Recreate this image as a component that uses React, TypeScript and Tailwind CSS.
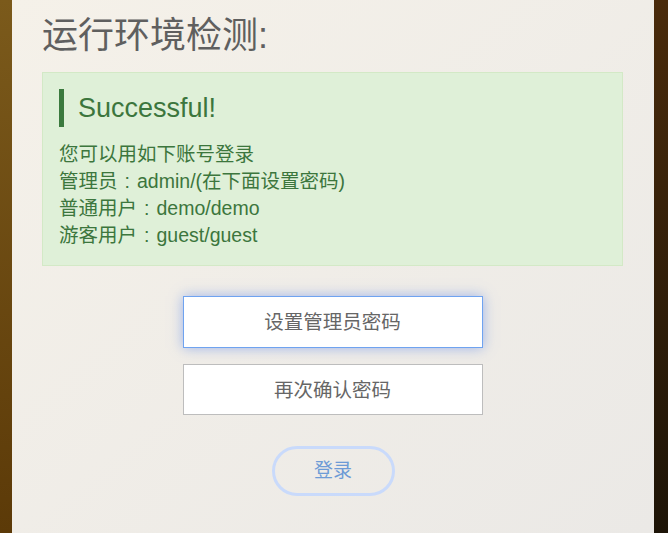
export default function App() {
  const font = { fontFamily: '"Liberation Sans", "Noto Sans CJK SC", sans-serif' }

  // full-width colon with the dots centered in its box, like the reference
  const Colon = () => <span className="inline-block w-[1em] text-center">:</span>

  return (
    <div className="flex h-[533px] w-[668px] overflow-hidden" style={font}>
      <div className="w-[12px] shrink-0 bg-gradient-to-b from-[#7b5a1b] to-[#5c3a08]" />
      <div className="flex flex-1 flex-col bg-gradient-to-br from-[#f5f1e9] to-[#ebe9e6] pl-[30px] pr-[31px]">
        <h1 className="mt-[14px] text-[36px] leading-[44px] text-[#5f5f5f]">运行环境检测:</h1>
        <div className="mt-[14px] border border-[#d3e9c6] bg-[#dff0d8] px-[16px] pb-[16px] pt-[16px] text-[#3c763d]">
          <div className="flex h-[38px] items-center border-l-[5px] border-[#3b7a3e] pl-[14px] text-[27px]">
            Successful!
          </div>
          <div className="mt-[14px] text-[19.5px] leading-[27px]">
            <div>您可以用如下账号登录</div>
            <div>管理员<Colon />admin/(在下面设置密码)</div>
            <div>普通用户<Colon />demo/demo</div>
            <div>游客用户<Colon />guest/guest</div>
          </div>
        </div>
        <div className="mt-[30px] flex flex-col items-center">
          <button className="flex h-[52px] w-[300px] items-center justify-center border border-[#6fa3f0] bg-white pt-[2px] text-[19.5px] text-[#666] shadow-[0_0_12px_rgba(102,140,233,0.6)]">
            设置管理员密码
          </button>
          <button className="mt-[16px] flex h-[51px] w-[300px] items-center justify-center border border-[#bdbdbd] bg-white pt-[2px] text-[19.5px] text-[#666]">
            再次确认密码
          </button>
          <button className="ml-[1px] mt-[31px] flex h-[50px] w-[123px] items-center justify-center rounded-full border-[3px] border-[#c9dafb] text-[19px] text-[#6d9bd6]">
            登录
          </button>
        </div>
      </div>
      <div className="w-[14px] shrink-0 bg-gradient-to-b from-[#4a2b0b] to-[#1d1407]" />
    </div>
  )
}
